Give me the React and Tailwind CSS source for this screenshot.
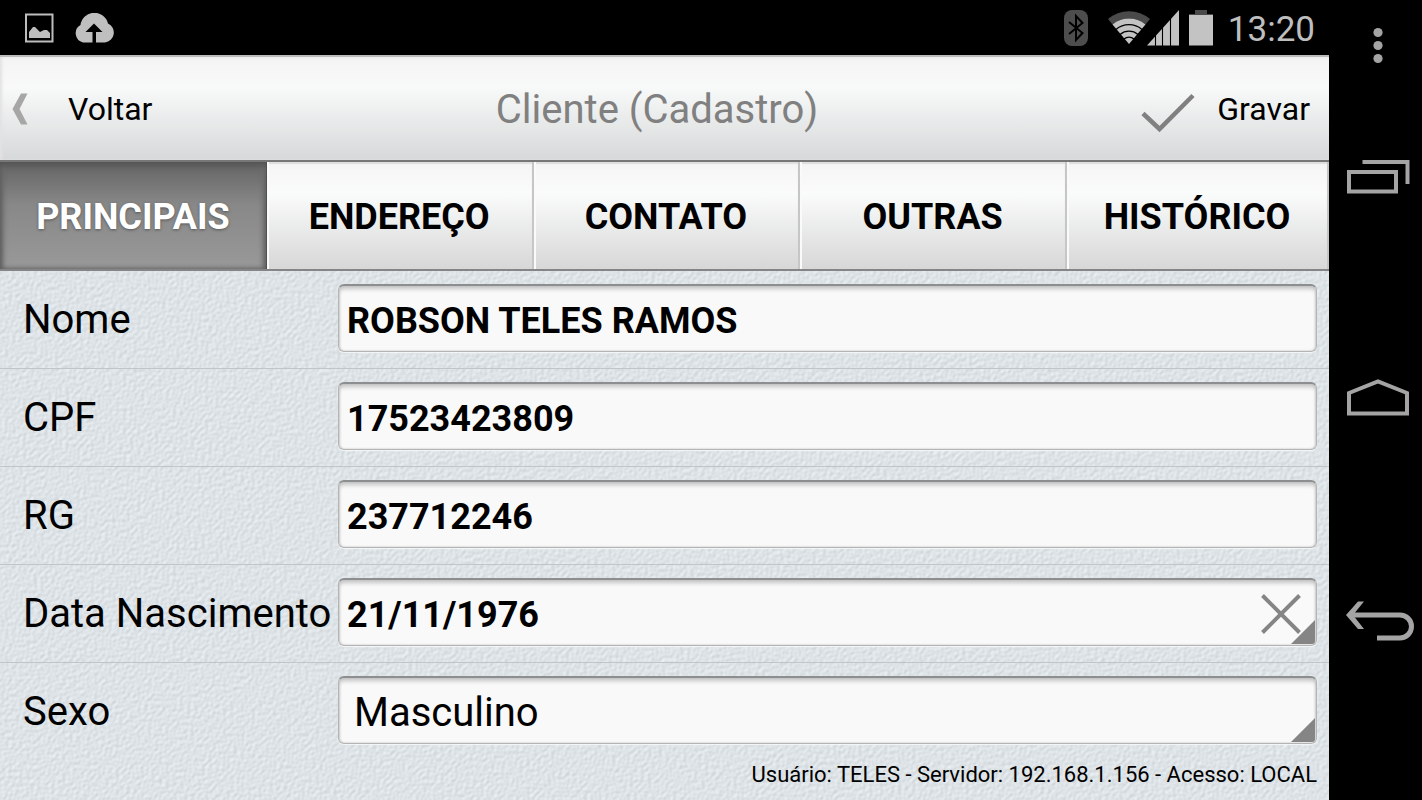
import React, { useState } from 'react';

const tabs = ['PRINCIPAIS', 'ENDEREÇO', 'CONTATO', 'OUTRAS', 'HISTÓRICO'];

const fieldClass =
    'block w-full h-[68px] rounded-md bg-[#f9f9f9] border border-t-2 border-[#b4b4b4] border-t-[#8c8e8f] shadow-[0_1px_1px_#f5f7f8,inset_0_4px_4px_-1px_#c3c3c3,inset_1px_0_2px_#d0d0d0,inset_-1px_0_2px_#d0d0d0] text-black outline-none';

function Row({ id, label, children }) {
    return (
        <div className="grid grid-cols-[338px_1fr] items-center h-[98px] pr-3 pb-[3px] border-b border-[#c0c5c8] last:border-transparent">
            <label htmlFor={id} className="pl-[23px] pt-1 text-[40px] leading-[48px] whitespace-nowrap">
                {label}
            </label>
            <div className="relative">{children}</div>
        </div>
    );
}

function Corner() {
    return (
        <svg className="absolute right-[2px] bottom-[2px] pointer-events-none" width="24" height="24" viewBox="0 0 24 24">
            <path d="M24 0V21Q24 24 21 24H0Z" fill="#858585" />
        </svg>
    );
}

function StatusBar() {
    return (
        <div className="flex items-center justify-between h-[55px] pl-6 pr-[14px] bg-black">
            <div className="flex items-center gap-5">
                <svg width="30" height="30" viewBox="0 0 30 30">
                    <path d="M2 1.500H28.500V28.500H2Z" fill="none" stroke="#bdbdbd" strokeWidth="2" />
                    <path d="M5 25V19L9 14H11L16 19L20 17H23L26 20V25Z" fill="#bdbdbd" />
                </svg>
                <svg width="40" height="30" viewBox="0 0 40 30">
                    <path d="M9 29.500A9.500 9.500 0 0 1 6.500 12A14 14 0 0 1 34 10.500A10 10 0 0 1 31 29.500Z" fill="#bfbfbf" />
                    <path d="M20 10.500L28.500 19H22V30H18.500V19H11.500Z" fill="#000" />
                </svg>
            </div>
            <div className="flex items-center">
                <svg className="mr-5" width="24" height="36" viewBox="0 0 24 36">
                    <rect width="24" height="36" rx="8" fill="#4d4d4d" />
                    <path d="M5 12L18.500 23L12 30V6L18.500 13L5 24" fill="none" stroke="#000" strokeWidth="2" />
                </svg>
                <svg width="72" height="36" viewBox="0 0 72 36">
                    <path d="M0 9A32 32 0 0 1 42 9L37.500 14.500A26 26 0 0 0 4.500 14.500Z" fill="#4a4a4a" />
                    <path d="M4.500 14.500A26 26 0 0 1 37.500 14.500L21 34Z" fill="#c3c3c3" />
                    <path d="M8 19.500A20 20 0 0 1 34 19.500M12 24.500A14 14 0 0 1 30 24.500M16 29A8 8 0 0 1 26 29" fill="none" stroke="#000" strokeWidth="1.300" />
                    <path d="M71 0V35.500H39Z" fill="#c3c3c3" />
                    <path d="M47.500 24V36M54.500 16V36M62.500 8V36" stroke="#000" strokeWidth="1.100" />
                </svg>
                <svg className="ml-2" width="26" height="36" viewBox="0 0 26 36">
                    <path d="M7 0H19V4H25V6H1V4H7Z" fill="#4a4a4a" />
                    <path d="M1 5H25V35.500H1Z" fill="#c3c3c3" />
                </svg>
                <span className="ml-[14px] pt-1 text-[35px] leading-[44px] text-[#bebebe]">13:20</span>
            </div>
        </div>
    );
}

function SystemNav() {
    const btn = 'flex items-center justify-center cursor-pointer';
    return (
        <nav className="flex flex-col items-center shrink-0 w-[93px] pl-1 pt-[27px] bg-black">
            <button type="button" aria-label="Menu" className={btn}>
                <svg width="12" height="37" viewBox="0 0 12 37" fill="#a4a4a4">
                    <circle cx="6" cy="5.500" r="4.600" />
                    <circle cx="6" cy="18.500" r="4.600" />
                    <circle cx="6" cy="31.500" r="4.600" />
                </svg>
            </button>
            <div className="flex flex-col items-center gap-[185px] pt-24">
                <button type="button" aria-label="Recentes" className={btn}>
                    <svg width="64" height="34" viewBox="0 0 64 34" fill="none" stroke="#a4a4a4" strokeWidth="4">
                        <path d="M3 12H50V31.500H3Z" />
                        <path d="M16.500 2H61.500V24" />
                    </svg>
                </button>
                <button type="button" aria-label="Início" className={btn}>
                    <svg width="64" height="37" viewBox="0 0 64 37" fill="none" stroke="#a4a4a4" strokeWidth="4">
                        <path d="M3 34.500V14L32 2.500L61 14V34.500Z" />
                    </svg>
                </button>
                <button type="button" aria-label="Retornar" className="flex items-center justify-center cursor-pointer pl-1">
                    <svg width="70" height="40" viewBox="0 0 70 40" fill="none" stroke="#a4a4a4" strokeWidth="5">
                        <path d="M5 14H55A11.500 11.500 0 0 1 55 37H32" />
                        <path d="M13 0.500H19L8 14L19 28H13L1 14Z" fill="#a4a4a4" stroke="none" />
                    </svg>
                </button>
            </div>
        </nav>
    );
}

// fabric grain behind the form
function Grain() {
    return (
        <svg className="absolute inset-0 w-full h-full pointer-events-none" aria-hidden="true">
            <filter id="grain" x="0" y="0" width="100%" height="100%" colorInterpolationFilters="sRGB">
                <feTurbulence type="fractalNoise" baseFrequency="0.28" numOctaves="1" seed="4" />
                <feColorMatrix values="0 0 0 0 0  0 0 0 0 0  0 0 0 0 0  1 0 0 0 0" />
                <feDiffuseLighting surfaceScale="0.3" diffuseConstant="1.155" lightingColor="#dde3e6">
                    <feDistantLight azimuth="225" elevation="60" />
                </feDiffuseLighting>
            </filter>
            <rect width="100%" height="100%" filter="url(#grain)" />
        </svg>
    );
}

export default function App() {
    const [tab, setTab] = useState('PRINCIPAIS');
    const [form, setForm] = useState({
        nome: 'ROBSON TELES RAMOS',
        cpf: '17523423809',
        rg: '237712246',
        nascimento: '21/11/1976',
        sexo: 'Masculino',
    });

    const update = (e) => {
        setForm({ ...form, [e.target.name]: e.target.value });
    };

    const inputClass = `${fieldClass} pl-2 pr-16 pt-1 text-[36px] font-bold`;

    return (
        <div className="flex min-h-screen bg-black text-black font-['Roboto',sans-serif]">
            <div className="flex flex-col flex-1 min-w-0">
                <StatusBar />

                {/* Header */}
                <header className="grid grid-cols-[1fr_auto_1fr] items-center h-[107px] pr-[19px] pl-1 border-t-2 border-t-[#bcbcbc] border-b-2 border-b-[#777] bg-linear-to-b from-[#f4f4f4] via-[#f8f9f9] via-30% to-[#d7d8d9] shadow-[inset_2px_0_3px_#e2e2e2]">
                    <button type="button" className="flex items-center gap-10 justify-self-start pl-2 text-[32px] leading-10 cursor-pointer">
                        <svg width="16" height="32" viewBox="0 0 16 32">
                            <path d="M9 0.500H15.500L7.500 16L15.500 31.500H9L0.500 16Z" fill="#a6a6a6" />
                        </svg>
                        Voltar
                    </button>
                    <h1 className="pt-0.5 text-[40px] leading-[48px] text-[#808080]">Cliente (Cadastro)</h1>
                    <button type="button" className="flex items-center gap-[22px] justify-self-end text-[32px] leading-10 cursor-pointer">
                        <svg className="mt-2" width="54" height="40" viewBox="0 0 54 40" fill="none" stroke="#808080" strokeWidth="4.500">
                            <path d="M2 20.500L18.500 36L52 2.500" />
                        </svg>
                        Gravar
                    </button>
                </header>

                {/* Tabs */}
                <div role="tablist" className="grid grid-cols-[1fr_1fr_1fr_1fr_262px] h-[109px] border-b-2 border-[#858585]">
                    {tabs.map((name) => (
                        <button
                            key={name}
                            type="button"
                            role="tab"
                            aria-selected={tab === name}
                            onClick={() => setTab(name)}
                            className={`pt-0.5 text-[36px] font-bold cursor-pointer ${
                                tab === name
                                    ? 'text-white bg-linear-to-b from-[#646464] via-[#888] via-40% to-[#999] border-r border-[#505050] shadow-[inset_0_3px_6px_#505050,inset_3px_0_5px_#707070,inset_-3px_0_5px_#777] [text-shadow:0_1px_3px_#555]'
                                    : 'bg-linear-to-b from-[#f5f5f5] via-[#fafbfb] via-30% to-[#d7d7d8] border-r-2 border-[#c6c6c6] shadow-[inset_2px_0_0_#fafafa,inset_0_2px_1px_#dedede]'
                            }`}
                        >
                            {name}
                        </button>
                    ))}
                </div>

                {/* Form */}
                <main className="relative flex-1 bg-[#dde3e6]">
                    <Grain />
                    <form className="relative" onSubmit={(e) => e.preventDefault()}>
                        <Row id="nome" label="Nome">
                            <input id="nome" name="nome" type="text" value={form.nome} onChange={update} className={inputClass} />
                        </Row>
                        <Row id="cpf" label="CPF">
                            <input id="cpf" name="cpf" type="text" value={form.cpf} onChange={update} className={inputClass} />
                        </Row>
                        <Row id="rg" label="RG">
                            <input id="rg" name="rg" type="text" value={form.rg} onChange={update} className={inputClass} />
                        </Row>
                        <Row id="nascimento" label="Data Nascimento">
                            <input id="nascimento" name="nascimento" type="text" value={form.nascimento} onChange={update} className={inputClass} />
                            <Corner />
                            <button
                                type="button"
                                aria-label="Limpar data"
                                onClick={() => setForm({ ...form, nascimento: '' })}
                                className="absolute right-4 top-4 cursor-pointer"
                            >
                                <svg width="40" height="40" viewBox="0 0 40 40" stroke="#858585" strokeWidth="4">
                                    <path d="M1.500 1.500L38.500 38.500M38.500 1.500L1.500 38.500" />
                                </svg>
                            </button>
                        </Row>
                        <Row id="sexo" label="Sexo">
                            <select id="sexo" name="sexo" value={form.sexo} onChange={update} className={`${fieldClass} appearance-none pl-[15px] pt-1 text-[40px]`}>
                                <option>Masculino</option>
                                <option>Feminino</option>
                            </select>
                            <Corner />
                        </Row>
                    </form>
                    <footer className="relative pr-3 text-right text-[22px] leading-7">
                        Usuário: TELES - Servidor: 192.168.1.156 - Acesso: LOCAL
                    </footer>
                </main>
            </div>

            <SystemNav />
        </div>
    );
}
